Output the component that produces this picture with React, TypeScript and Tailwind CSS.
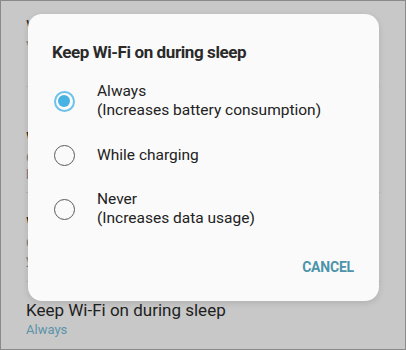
const options = [
  { label: 'Always', note: '(Increases battery consumption)', selected: true },
  { label: 'While charging', note: '', selected: false },
  { label: 'Never', note: '(Increases data usage)', selected: false },
]

function Radio({ on }: { on: boolean }) {
  if (on) {
    return (
      <div className="w-[21px] h-[21px] rounded-full border-2 border-[#6cc2ea] flex items-center justify-center shrink-0">
        <div className="w-[12px] h-[12px] rounded-full bg-[#48b2e2]" />
      </div>
    )
  }
  return <div className="w-[21px] h-[21px] rounded-full border-[1.5px] border-[#5a5a5a] shrink-0" />
}

export default function App() {
  return (
    <div
      className="relative w-[406px] h-[350px] overflow-hidden border border-[#8a8a8a] bg-[#c8c8c8]"
      style={{ fontFamily: 'Roboto, "Noto Sans", sans-serif' }}
    >
      {/* dimmed settings list behind the dialog */}
      <div className="flex flex-col px-[25px]">
        <div className="h-[86px] flex flex-col pt-[14px] border-b border-[#b4b4b4]">
          <div className="text-[17px] leading-[22px] text-[#262626]">Wi-Fi Direct</div>
          <div className="text-[13px] leading-[18px] text-[#7c7c7c]">View nearby devices</div>
        </div>
        <div className="h-[106px] flex flex-col pt-[40px] border-b border-[#b4b4b4]">
          <div className="text-[17px] leading-[22px] text-[#262626]">Wi-Fi power saving mode</div>
          <div className="text-[13px] leading-[17px] text-[#7c7c7c]">Optimise Wi-Fi to reduce battery</div>
          <div className="text-[13px] leading-[17px] text-[#7c7c7c]">by analysing traffic</div>
        </div>
        <div className="h-[89px] flex flex-col pt-[19px] border-b border-[#b4b4b4]">
          <div className="text-[17px] leading-[22px] text-[#262626]">Wi-Fi timer</div>
          <div className="text-[13px] leading-[17px] text-[#7c7c7c]">Configure when Wi-Fi turns on</div>
          <div className="text-[13px] leading-[17px] text-[#7c7c7c]">your device</div>
        </div>
        <div className="flex flex-col pt-[17px]">
          <div className="text-[17px] leading-[22px] text-[#1e1e1e]">Keep Wi-Fi on during sleep</div>
          <div className="text-[13px] leading-[18px] text-[#5b93a8]">Always</div>
        </div>
      </div>

      {/* dialog */}
      <div className="absolute left-[27px] top-[13px] w-[351px] h-[287px] rounded-[14px] bg-[#fafafa] shadow-[0_2px_6px_rgba(0,0,0,0.12)] flex flex-col px-[24px] pt-[26px]">
        <div className="text-[17px] leading-[24px] font-bold text-[#2a2a2a] tracking-[-0.4px]">
          Keep Wi-Fi on during sleep
        </div>
        <div className="flex flex-col mt-[10px]">
          {options.map((o) => (
            <div key={o.label} className="h-[54px] flex items-center">
              <div className="w-[22px] ml-[1px] flex justify-center">
                <Radio on={o.selected} />
              </div>
              <div className="ml-[22px] flex flex-col text-[15.5px] leading-[19px] text-[#222]">
                <span>{o.label}</span>
                {o.note && <span>{o.note}</span>}
              </div>
            </div>
          ))}
        </div>
        <div className="flex justify-end mt-[21px]">
          <span className="text-[14px] leading-[20px] font-bold text-[#4c94aa] tracking-[-0.2px] mr-[1px]">
            CANCEL
          </span>
        </div>
      </div>
    </div>
  )
}
